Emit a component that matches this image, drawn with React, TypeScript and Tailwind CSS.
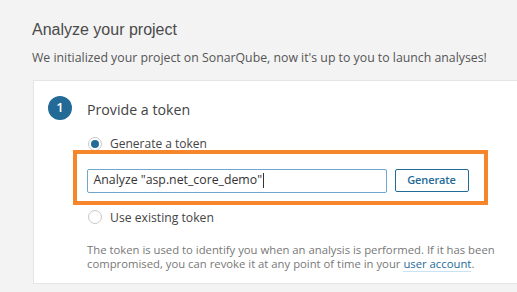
export default function App() {
  return (
    <div
      className="w-[517px] h-[292px] overflow-hidden bg-[#f3f3f3] pl-8 pt-[18px] text-[#444]"
      style={{ fontFamily: '"Open Sans", "Noto Sans", sans-serif' }}
    >
      <h1
        className="text-[16px] leading-[24px] font-normal text-[#4a4a4a]"
        style={{ fontFamily: '"Liberation Sans", Arial, sans-serif' }}
      >
        Analyze your project
      </h1>
      <p className="mt-[8px] text-[12.3px] leading-[16px] text-[#555]">
        We initialized your project on SonarQube, now it's up to you to launch analyses!
      </p>

      {/* Card */}
      <div className="mt-[14px] ml-[1px] w-[500px] h-[204px] bg-white border border-[#e6e6e6] pt-[15px] pl-[14px]">
        <div className="flex items-center h-[24px]">
          <div className="w-[24px] h-[24px] rounded-full bg-[#236a97] text-white text-[13px] font-semibold flex items-center justify-center">
            1
          </div>
          <span className="ml-[15px] pt-[4px] text-[14.2px] text-[#444]">Provide a token</span>
        </div>

        <div className="pl-[40px]">
          {/* Generate a token */}
          <div className="mt-[12px] flex items-center h-[24px]">
            <span className="w-[14px] h-[14px] rounded-full border border-[#c9c9c9] flex items-center justify-center">
              <span className="w-[8px] h-[8px] rounded-full bg-[#236a97]" />
            </span>
            <span className="ml-[8px] text-[12px] text-[#444]">Generate a token</span>
          </div>

          {/* Highlighted input row */}
          <div className="relative -mt-[6px] ml-[-15px] w-[415px] h-[55px] border-[4.5px] border-[#f7862a] pl-[9.5px] pt-[14.5px] flex items-start">
            <div className="w-[300px] h-[24px] border border-[#6fa6cf] rounded-[2px] flex items-center px-[6px] text-[12.3px] text-[#333]">
              Analyze "asp.net_core_demo"<span className="w-px h-[15px] bg-[#333] ml-px" />
            </div>
            <button className="ml-[8px] w-[74px] h-[23px] border border-[#236a97] rounded-[2px] text-[11px] tracking-[-0.1px] font-semibold text-[#236a97] flex items-center justify-center">
              Generate
            </button>
          </div>

          {/* Use existing token */}
          <div className="mt-[2px] flex items-center h-[20px]">
            <span className="w-[14px] h-[14px] rounded-full border border-[#c9c9c9]" />
            <span className="ml-[8px] pt-[2px] text-[12.2px] text-[#444]">Use existing token</span>
          </div>

          <p className="mt-[16px] -ml-px text-[11.3px] leading-[13.5px] text-[#777]">
            The token is used to identify you when an analysis is performed. If it has been
            <br />
            compromised, you can revoke it at any point of time in your{" "}
            <span className="text-[#236a97] border-b border-[#cae3f2]">user account</span>.
          </p>
        </div>
      </div>
    </div>
  );
}
